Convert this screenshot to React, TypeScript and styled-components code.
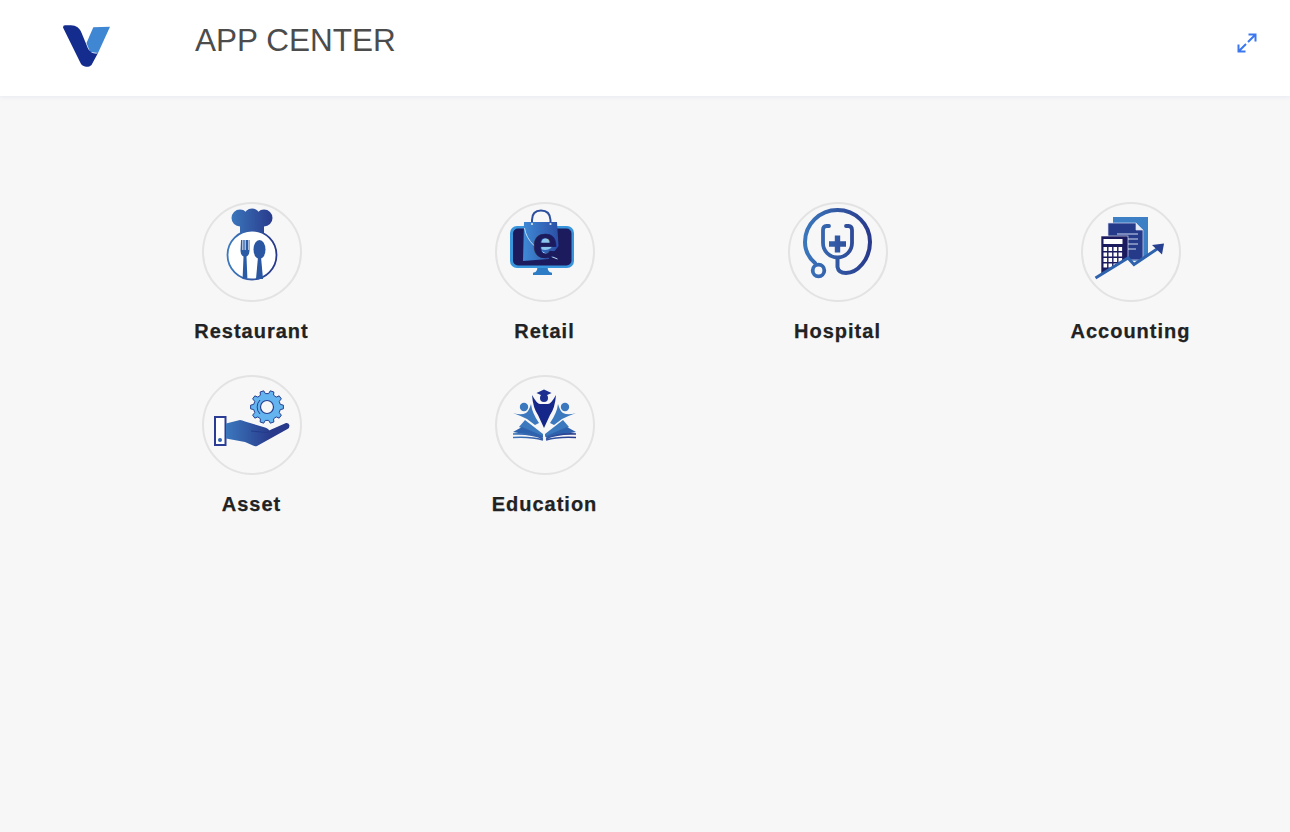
import React from 'react';
import styled, { createGlobalStyle } from 'styled-components';

const GlobalStyle = createGlobalStyle`
  html, body {
    margin: 0;
    padding: 0;
    height: 100%;
    background: #f7f7f8;
    font-family: "Liberation Sans", Arial, sans-serif;
  }
`;

const Page = styled.div`
  width: 100%;
  min-height: 832px;
  background: #f7f7f8;
  overflow: hidden;
`;

const Header = styled.header`
  height: 96px;
  box-sizing: border-box;
  padding: 0 33px 0 63px;
  display: flex;
  align-items: flex-start;
  background: #ffffff;
  box-shadow: 0 1px 4px rgba(225, 228, 240, 0.7);
`;

const LogoBox = styled.div`
  width: 47px;
  height: 42px;
  margin: 25px 85px 0 0;
  svg { display: block; }
`;

const Title = styled.h1`
  margin: 21px 0 0;
  flex: 1;
  font-size: 31.5px;
  line-height: 38px;
  font-weight: 400;
  color: #4c4c4c;
`;

const ExpandButton = styled.button`
  width: 20px;
  height: 20px;
  margin-top: 33px;
  padding: 0;
  border: 0;
  background: none;
  cursor: pointer;
  svg { display: block; }
`;

const Grid = styled.main`
  display: grid;
  grid-template-columns: repeat(4, 293px);
  grid-auto-rows: 173px;
  padding: 106px 0 0 105px;
`;

const AppTile = styled.a`
  display: flex;
  flex-direction: column;
  align-items: center;
  color: #222222;
  text-decoration: none;
  cursor: pointer;
  &:nth-child(n + 5) {
    margin-top: -0.5px;
  }
`;

const IconCircle = styled.div`
  width: 100px;
  height: 100px;
  box-sizing: border-box;
  border: 2px solid #e3e3e3;
  border-radius: 50%;
  position: relative;
  svg {
    position: absolute;
    left: -2px;
    top: -2px;
    display: block;
  }
`;

const AppName = styled.span`
  margin-top: 17px;
  font-size: 20px;
  line-height: 25px;
  font-weight: 700;
  letter-spacing: 1px;
  -webkit-text-stroke: 0.25px #222222;
`;

const Blue = ({ id, x1 = 15, x2 = 85, from = '#3b78bd', to = '#28388a' }: { id: string; x1?: number; x2?: number; from?: string; to?: string }) => (
  <defs>
    <linearGradient id={id} gradientUnits="userSpaceOnUse" x1={x1} y1="0" x2={x2} y2="0">
      <stop offset="0" stopColor={from} />
      <stop offset="1" stopColor={to} />
    </linearGradient>
  </defs>
);

const Svg = ({ children }: { children: React.ReactNode }) => (
  <svg width="100" height="100" viewBox="0 0 100 100">{children}</svg>
);

const RestaurantIcon = () => (
  <Svg>
    <Blue id="gr" x1={28} x2={72} />
    <circle cx="38" cy="16" r="8.5" fill="url(#gr)" />
    <circle cx="50" cy="14.5" r="8" fill="url(#gr)" />
    <circle cx="62" cy="16" r="8.5" fill="url(#gr)" />
    <path d="M38 18h24v15q-12-5-24 0z" fill="url(#gr)" />
    <circle cx="50" cy="53" r="24.5" fill="#fff" stroke="url(#gr)" strokeWidth="1.8" />
    <path
      d="M39 38h1.4v10h.9V38h1.4v10h.9V38H46v10h.6V38h.9v11q0 4-3 5.5l.9 22h-4.800l.9-22q-3-1.500-3-5.500z"
      fill="#2a5ca6"
    />
    <ellipse cx="57.500" cy="47.500" rx="6" ry="9.500" fill="#2b57a2" />
    <path d="M56 55h3l2 22h-7z" fill="#2b57a2" />
  </Svg>
);

const RetailIcon = () => (
  <Svg>
    <Blue id="gb" x1={28} x2={66} from="#3f8ad6" to="#2a4ba2" />
    <path d="M38 73v-2.200q3-.3 4-2.800l.5-3h10l.5 3q1 2.500 4 2.800V73z" fill="#2f7cc6" />
    <rect x="15" y="24" width="64" height="42" rx="7" fill="#3a96dc" />
    <rect x="18" y="26.500" width="58.500" height="37" rx="5" fill="#1c1b5e" />
    <path d="M29 20h33l1.500 24-10 13-25.500 2z" fill="url(#gb)" />
    <path d="M29.500 26q3 20 33 31" fill="none" stroke="#bcdcf5" strokeWidth="1" />
    <path d="M37 20v-2q0-9.500 9-9.500t9.500 9.500v2" fill="none" stroke="#2c4e9e" strokeWidth="2" />
    <circle cx="37" cy="22" r="1.100" fill="#dbe8f6" />
    <circle cx="55.500" cy="22" r="1.100" fill="#dbe8f6" />
    <ellipse cx="50" cy="42" rx="8" ry="6" fill="#8cc6ef" />
    <text
      x="37.500"
      y="56"
      fontFamily="'Liberation Sans', Arial, sans-serif"
      fontWeight="700"
      fontSize="45"
      fill="#1c1b5e"
      stroke="#1c1b5e"
      strokeWidth=".6"
    >
      e
    </text>
  </Svg>
);

const HospitalIcon = () => (
  <Svg>
    <Blue id="gh" x1={15} x2={84} />
    <circle cx="30.500" cy="68.500" r="5.800" fill="none" stroke="url(#gh)" strokeWidth="3.800" />
    <path
      d="M27 61C20 55 17 48 17 40a32.500 32 0 0 1 65 0c0 18-13 31-24 31q-7.500 0-8.500-6V56"
      fill="none"
      stroke="url(#gh)"
      strokeWidth="4"
      strokeLinecap="round"
    />
    <path
      d="M41 24h-2.500q-3.500 .2-3.500 4v13c0 8 6.500 14.500 14.500 14.500s14.500-6.500 14.500-14.500V28q0-3.800-3.500-4h-2.500"
      fill="none"
      stroke="url(#gh)"
      strokeWidth="3.800"
      strokeLinecap="round"
    />
    <path d="M41 42h17M49.500 33.500v17" stroke="url(#gh)" strokeWidth="5.400" fill="none" />
  </Svg>
);

const AccountingIcon = () => {
  const keys = [0, 1, 2, 3];
  return (
    <Svg>
      <rect x="32" y="15" width="35" height="44" fill="#3d7fc4" />
      <path d="M27 21h28l7 7v30H27z" fill="#263a8a" stroke="#d5dcf0" strokeWidth=".7" />
      <path d="M55 21v7h7" fill="#e7ebf6" stroke="#d5dcf0" strokeWidth=".7" />
      <path d="M36 32h21M36 37h21M40 42h17M42 47h13" stroke="#cfd8ef" strokeWidth="1" />
      <rect x="20" y="34" width="27" height="38" fill="#1c1a5e" stroke="#f7f7f8" strokeWidth=".6" />
      <rect x="22.500" y="37" width="19" height="5" fill="#ffffff" />
      {keys.map(r => keys.map(c => (
        <rect key={`${r}-${c}`} x={22.5 + c * 5} y={45 + r * 5.5} width="3.6" height="4" fill="#ffffff" />
      )))}
      <path d="M14 77L47 56l6 6.500L80 45v32z" fill="#f7f7f8" />
      <path d="M14.500 76L47 56l6 6.500L79 45" fill="none" stroke="#2f62ad" strokeWidth="3" />
      <path d="M71 43l12-1.500-2 11z" fill="#27408f" />
    </Svg>
  );
};

// gear outline worked out from tooth count
function gearPath(cx: number, cy: number, outer: number, inner: number, teeth: number) {
  const pts: string[] = [];
  for (let i = 0; i < teeth; i++) {
    const a = (i / teeth) * Math.PI * 2;
    const w = Math.PI / teeth;
    [[inner, -w * 0.62], [outer, -w * 0.36], [outer, w * 0.36], [inner, w * 0.62]].forEach(([r, d]) => {
      pts.push(`${(cx + r * Math.cos(a + d)).toFixed(2)} ${(cy + r * Math.sin(a + d)).toFixed(2)}`);
    });
  }
  return `M${pts.join('L')}z`;
}

const AssetIcon = () => (
  <Svg>
    <Blue id="ga" x1={24} x2={70} />
    <path d={gearPath(65, 32, 16.5, 13.5, 10)} fill="#63b4ef" stroke="#27408f" strokeWidth="1" strokeLinejoin="round" />
    <circle cx="65" cy="32" r="6.500" fill="#f7f7f8" stroke="#27408f" strokeWidth="1.200" />
    <path d="M58 39a10 10 0 0 1 0-14" fill="none" stroke="#27408f" strokeWidth="1" />
    <rect x="13" y="42" width="10.500" height="28" fill="#fff" stroke="#2a3c94" strokeWidth="2" />
    <circle cx="18" cy="65" r="2" fill="#2f62ad" />
    <path
      d="M24 48.500L38 45q2 0 5 1.500l20 6q4 1.500 4 3l17-7.500q3-.5 3.500 2.500 0 2.500-2 3.500L55 71q-2 .6-4-.5L43 67 24 63.500z"
      fill="url(#ga)"
    />
    <path d="M49 56l15 1.500q3 0 3-2" fill="none" stroke="#223a8a" strokeWidth=".9" />
  </Svg>
);

const EducationIcon = () => (
  <Svg>
    <Blue id="ge" x1={16} x2={82} />
    <path d="M49 14.500l7.500 3.500-7.500 3.500-7.500-3.500z" fill="#1d2f8f" />
    <circle cx="49" cy="23" r="4" fill="#1d2f8f" />
    <path d="M37 20q5 9 8 9h8q3 0 8-9-1 13-6 20l-6 13-6-13q-5-7-6-20z" fill="#16278a" />
    <circle cx="29" cy="32" r="4.200" fill="#3b78bd" />
    <circle cx="70" cy="32" r="4.200" fill="#3b78bd" />
    <path d="M18 38q8 2.500 13 0 3-2 5-9 1 9 8 19l-4 2-8-6q-6-3-14-6z" fill="#3b78bd" />
    <path d="M81 38q-8 2.500-13 0-3-2-5-9-1 9-8 19l4 2 8-6q6-3 14-6z" fill="#3b78bd" />
    <path d="M30 45l18 14v3L24 52z" fill="#3b78bd" />
    <path d="M68 45L50 59v3l24-10z" fill="#3b78bd" />
    <path d="M27 52l21 9v1.500L18 57z" fill="#2f62ad" />
    <path d="M72 52l-21 9v1.500L81 57z" fill="#2f62ad" />
    <path d="M18 59q18-1 30 4.500M18 62.500q18-1 30 2.500M81 59q-18-1-30 4.500M81 62.500q-18-1-30 2.500" fill="none" stroke="url(#ge)" strokeWidth="1.600" />
  </Svg>
);

const apps = [
  { name: 'Restaurant', icon: <RestaurantIcon /> },
  { name: 'Retail', icon: <RetailIcon /> },
  { name: 'Hospital', icon: <HospitalIcon /> },
  { name: 'Accounting', icon: <AccountingIcon /> },
  { name: 'Asset', icon: <AssetIcon /> },
  { name: 'Education', icon: <EducationIcon /> },
];

export default function App() {
  return (
    <Page>
      <GlobalStyle />
      <Header>
        <LogoBox>
          <svg width="47" height="42" viewBox="0 0 47 42">
            <path d="M30.300 2.300L47 1.700 35 28l-8-1-3.500-9z" fill="#3f86d3" />
            <path
              d="M0 2.500Q0 .3 2 .3h6c5 0 9 3 10.600 7.700L24 21c1.500 5 6 9 11 7l-6.500 12c-1.500 1.600-3.500 1.800-5.500 1.700-2.500-.2-4.600-1.200-6-4.700z"
              fill="#142c8e"
            />
          </svg>
        </LogoBox>
        <Title>APP CENTER</Title>
        <ExpandButton aria-label="Full screen">
          <svg width="20" height="20" viewBox="0 0 20 20" fill="none" stroke="#3b78f0" strokeWidth="2">
            <path d="M11 9l6.500-6.500M11.500 1.500h7v7" />
            <path d="M9 11l-6.500 6.500M1.500 11.500v7h7" />
          </svg>
        </ExpandButton>
      </Header>
      <Grid>
        {apps.map(app => (
          <AppTile key={app.name}>
            <IconCircle>{app.icon}</IconCircle>
            <AppName>{app.name}</AppName>
          </AppTile>
        ))}
      </Grid>
    </Page>
  );
}
